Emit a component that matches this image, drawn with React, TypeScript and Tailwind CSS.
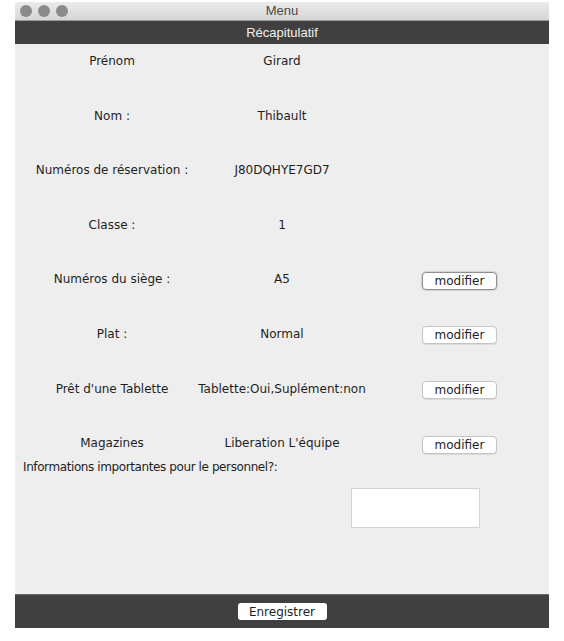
import React from "react";

const rows: { label: string; value: string; button?: boolean }[] = [
  { label: "Prénom", value: "Girard" },
  { label: "Nom :", value: "Thibault" },
  { label: "Numéros de réservation :", value: "J80DQHYE7GD7" },
  { label: "Classe :", value: "1" },
  { label: "Numéros du siège :", value: "A5", button: true },
  { label: "Plat :", value: "Normal", button: true },
  { label: "Prêt d'une Tablette", value: "Tablette:Oui,Suplément:non", button: true },
  { label: "Magazines", value: "Liberation L'équipe", button: true },
];

export default function App() {
  return (
    <div className="w-[564px] h-[641px] bg-white pl-[15px] pt-[2px]" style={{ fontFamily: '"DejaVu Sans", sans-serif' }}>
      <div className="w-[534px] flex flex-col">
        {/* Title bar */}
        <div className="h-[19px] bg-gradient-to-b from-[#ebebeb] to-[#d6d6d6] flex items-center relative border-b border-[#9a9a9a]">
          <div className="flex gap-[6px] pl-[5px]">
            <div className="w-[12px] h-[12px] rounded-full bg-[#8b8b8b]" />
            <div className="w-[12px] h-[12px] rounded-full bg-[#8b8b8b]" />
            <div className="w-[12px] h-[12px] rounded-full bg-[#8b8b8b]" />
          </div>
          <div className="absolute inset-0 flex items-center justify-center text-[13px] text-[#4a4a4a]" style={{ fontFamily: '"Liberation Sans", Arial, sans-serif' }}>
            Menu
          </div>
        </div>
        {/* Header */}
        <div className="h-[23px] bg-[#404040] flex items-center justify-center text-[13px] text-[#f2f2f2]" style={{ fontFamily: '"Liberation Sans", Arial, sans-serif' }}>
          Récapitulatif
        </div>
        {/* Content */}
        <div className="h-[550px] bg-[#eeeeee] flex flex-col text-[12px] text-[#1e1e1e]">
          <div className="flex flex-col gap-y-[34.6px] pt-[7px]">
            {rows.map((r) => (
              <div key={r.label} className="h-[20px] flex items-center">
                <div className="w-[194px] flex justify-center whitespace-nowrap">{r.label}</div>
                <div className="w-[146px] flex justify-center whitespace-nowrap">{r.value}</div>
                {r.button && (
                  <button
                    className={
                      "ml-[67px] mt-[3px] w-[75px] h-[18px] bg-white rounded-[4px] text-[12px] leading-none text-[#1e1e1e] flex items-center justify-center " +
                      (r.label === "Numéros du siège :"
                        ? "border border-[#8f8f8f] shadow-[0_0_1px_1px_rgba(0,0,0,0.12)]"
                        : "border border-[#c4c4c4] shadow-[0_1px_0_rgba(0,0,0,0.08)]")
                    }
                    style={{ fontFamily: '"DejaVu Sans", sans-serif' }}
                  >
                    modifier
                  </button>
                )}
              </div>
            ))}
          </div>
          <div className="flex items-start mt-[6px]">
            <div className="w-[336px] pl-[8px] leading-[16px] whitespace-nowrap tracking-[-0.4px]">Informations importantes pour le personnel?:</div>
            <div className="mt-[29px] w-[129px] h-[40px] bg-white border border-[#d4d4d4]" />
          </div>
        </div>
        {/* Bottom bar */}
        <div className="h-[34px] bg-[#404040] border-t border-[#6a6a6a] flex items-center justify-center">
          <button className="w-[89px] h-[17px] bg-white rounded-[3px] text-[12px] leading-none text-[#1e1e1e] flex items-center justify-center" style={{ fontFamily: '"DejaVu Sans", sans-serif' }}>
            Enregistrer
          </button>
        </div>
      </div>
    </div>
  );
}
